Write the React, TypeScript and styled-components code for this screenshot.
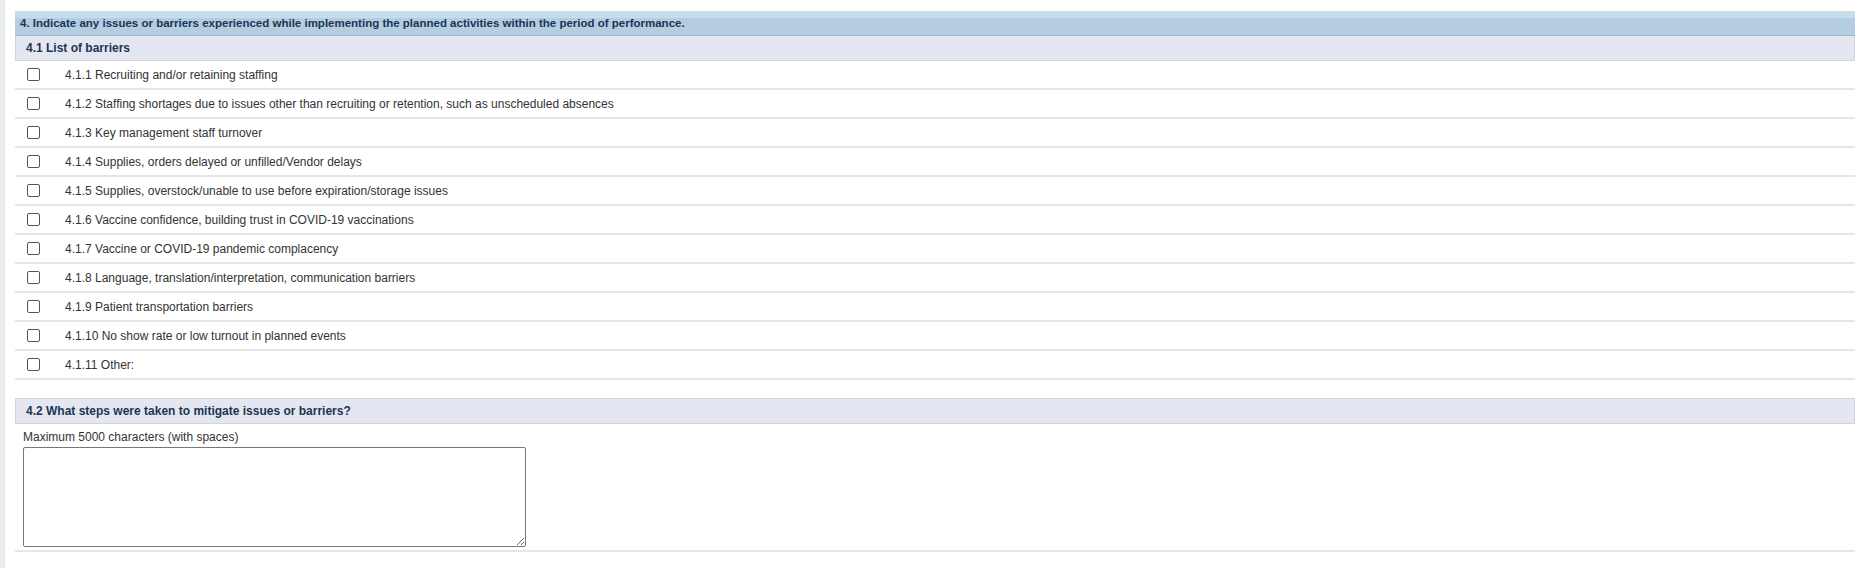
import React from "react";
import styled, { createGlobalStyle } from "styled-components";

const Global = createGlobalStyle`
  html, body { margin: 0; padding: 0; background: #fff; }
  body { font-family: Arial, "Liberation Sans", sans-serif; font-size: 12px; color: #333; }
`;

const Page = styled.div`
  display: flex;
  min-height: 568px;
`;
const SideStrip = styled.div`
  width: 4px;
  background: #eceef0;
  border-right: 1px solid #e2e4e6;
  flex-shrink: 0;
`;
const Panel = styled.div`
  flex: 1;
  margin: 11px 5px 0 10px;
  display: flex;
  flex-direction: column;
`;
const SectionHeader = styled.div`
  height: 24px;
  display: flex;
  align-items: center;
  padding-left: 5px;
  background: linear-gradient(#c9dcea 0 30%, #b3cde1 30% 100%);
  border-bottom: 1px solid #9fb8cc;
  font-weight: bold;
  font-size: 11.5px;
  color: #1c3553;
`;
const SubHeader = styled.div<{ $top?: number }>`
  height: 24px;
  display: flex;
  align-items: center;
  padding-left: 10px;
  margin-top: ${(p) => p.$top ?? 0}px;
  background: #e4e7f1;
  border: 1px solid #d0d4dc;
  border-top: ${(p) => (p.$top ? "1px solid #d0d4dc" : "none")};
  font-weight: bold;
  font-size: 12px;
  color: #1c3553;
`;
const Row = styled.label`
  height: 27px;
  display: flex;
  align-items: center;
  border-bottom: 2px solid #e6e6e6;
  font-size: 12px;
  color: #333;
`;
const Box = styled.span`
  width: 11px;
  height: 11px;
  border: 1px solid #555;
  border-radius: 2px;
  margin-left: 12px;
  margin-right: 25px;
  background: #fff;
`;
const Hint = styled.div`
  margin: 6px 0 3px 8px;
  font-size: 12px;
  color: #333;
`;
const Area = styled.textarea`
  width: 503px;
  height: 100px;
  margin-left: 8px;
  border: 1px solid #767676;
  border-radius: 2px;
  resize: vertical;
  box-sizing: border-box;
`;
const Rule = styled.div`
  margin-top: 3px;
  border-bottom: 2px solid #e6e6e6;
`;

const items = [
  "4.1.1 Recruiting and/or retaining staffing",
  "4.1.2 Staffing shortages due to issues other than recruiting or retention, such as unscheduled absences",
  "4.1.3 Key management staff turnover",
  "4.1.4 Supplies, orders delayed or unfilled/Vendor delays",
  "4.1.5 Supplies, overstock/unable to use before expiration/storage issues",
  "4.1.6 Vaccine confidence, building trust in COVID-19 vaccinations",
  "4.1.7 Vaccine or COVID-19 pandemic complacency",
  "4.1.8 Language, translation/interpretation, communication barriers",
  "4.1.9 Patient transportation barriers",
  "4.1.10 No show rate or low turnout in planned events",
  "4.1.11 Other:",
];

export default function App() {
  return (
    <Page>
      <Global />
      <SideStrip />
      <Panel>
        <SectionHeader>
          4. Indicate any issues or barriers experienced while implementing the planned activities within the period of performance.
        </SectionHeader>
        <SubHeader>4.1 List of barriers</SubHeader>
        {items.map((t) => (
          <Row key={t}>
            <Box />
            {t}
          </Row>
        ))}
        <SubHeader $top={18}>4.2 What steps were taken to mitigate issues or barriers?</SubHeader>
        <Hint>Maximum 5000 characters (with spaces)</Hint>
        <Area />
        <Rule />
      </Panel>
    </Page>
  );
}
